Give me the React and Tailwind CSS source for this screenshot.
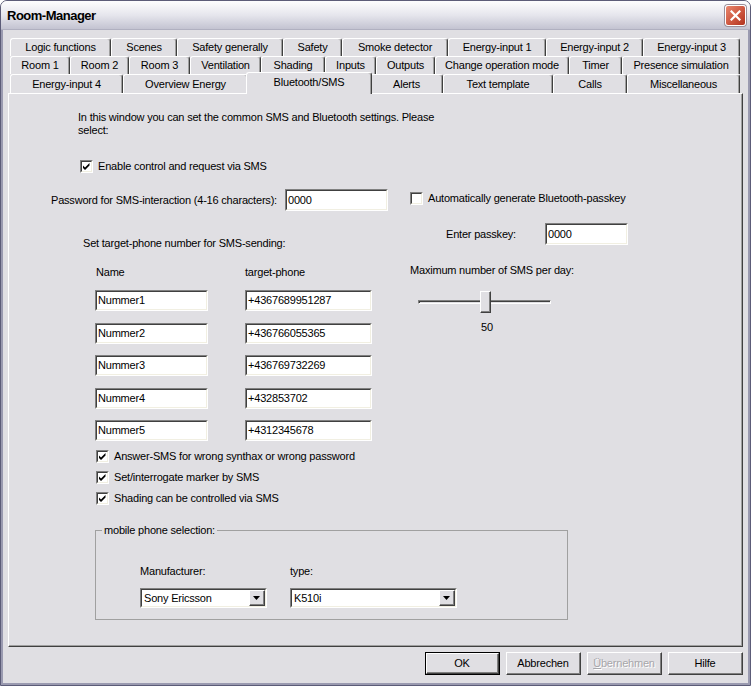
import React from 'react';

const ROW1 = [
  ['Logic functions', 'w-[101px]'],
  ['Scenes', 'w-[66px]'],
  ['Safety generally', 'w-[106px]'],
  ['Safety', 'w-[59px]'],
  ['Smoke detector', 'w-[106px]'],
  ['Energy-input 1', 'w-[98px]'],
  ['Energy-input 2', 'w-[97px]'],
  ['Energy-input 3', 'w-[97px]'],
];
const ROW2 = [
  ['Room 1', 'w-[60px]'],
  ['Room 2', 'w-[59px]'],
  ['Room 3', 'w-[61px]'],
  ['Ventilation', 'w-[71px]'],
  ['Shading', 'w-[64px]'],
  ['Inputs', 'w-[51px]'],
  ['Outputs', 'w-[59px]'],
  ['Change operation mode', 'w-[134px]'],
  ['Timer', 'w-[53px]'],
  ['Presence simulation', 'w-[118px]'],
];
const ROW3 = [
  ['Energy-input 4', 'w-[113px]'],
  ['Overview Energy', 'w-[125px]'],
  ['Bluetooth/SMS', 'w-[122px]', true],
  ['Alerts', 'w-[73px]'],
  ['Text template', 'w-[110px]'],
  ['Calls', 'w-[74px]'],
  ['Miscellaneous', 'w-[113px]'],
];

const PHONES = [
  ['Nummer1', '+4367689951287'],
  ['Nummer2', '+436766055365'],
  ['Nummer3', '+436769732269'],
  ['Nummer4', '+432853702'],
  ['Nummer5', '+4312345678'],
];

const Tab = ({ label, w, h = 'h-[18px]' }) => (
  <div className={`${w} ${h} shrink-0 flex items-center justify-center whitespace-nowrap border-t border-l border-white border-r border-r-[#404040] shadow-[inset_-1px_0_0_#a0a0a0] rounded-t-[3px]`}>
    {label}
  </div>
);

const ActiveTab = ({ label }) => (
  <div className="relative z-10 -mx-[2px] -mt-[2px] w-[126px] h-[22px] shrink-0 flex items-center justify-center pb-[2px] bg-[#e0dfe3] whitespace-nowrap border-t border-l border-white border-r border-r-[#404040] shadow-[inset_-1px_0_0_#a0a0a0] rounded-t-[3px]">
    {label}
  </div>
);

const Edit = ({ value, className }) => (
  <div className={`shrink-0 border-t border-l border-t-[#808080] border-l-[#808080] border-b border-r border-b-white border-r-white ${className}`}>
    <div className="h-full flex items-center pl-[1px] bg-white border-t border-l border-t-[#404040] border-l-[#404040] border-b border-r border-b-[#f1efe2] border-r-[#f1efe2]">
      {value}
    </div>
  </div>
);

const Check = ({ checked, label, className = '' }) => (
  <div className={`flex items-center h-[13px] ${className}`}>
    <span className="w-[13px] h-[13px] shrink-0 border-t border-l border-t-[#808080] border-l-[#808080] border-b border-r border-b-white border-r-white">
      <span className="block w-[11px] h-[11px] bg-white border-t border-l border-t-[#404040] border-l-[#404040] border-b border-r border-b-[#f1efe2] border-r-[#f1efe2]">
        {checked && (
          <svg width="9" height="9" viewBox="0 0 9 9" className="block">
            <path d="M1 3.5 L3 5.5 L7.5 1 L7.5 3.5 L3 8 L1 6 Z" fill="#000" />
          </svg>
        )}
      </span>
    </span>
    <span className="ml-[5px] whitespace-nowrap">{label}</span>
  </div>
);

const Raised = ({ className = '', children }) => (
  <div className={`border-t border-l border-white border-b border-r border-b-[#404040] border-r-[#404040] ${className}`}>
    <div className="w-full h-full flex items-center justify-center border-b border-r border-b-[#808080] border-r-[#808080]">
      {children}
    </div>
  </div>
);

const Combo = ({ value, className }) => (
  <Edit
    className={className}
    value={
      <div className="flex w-full items-center justify-between pl-[1px]">
        <span>{value}</span>
        <Raised className="w-[16px] h-[16px] bg-[#e0dfe3]">
          <svg width="7" height="4" viewBox="0 0 7 4">
            <path d="M0 0 H7 L3.5 4 Z" fill="#000" />
          </svg>
        </Raised>
      </div>
    }
  />
);

const Button = ({ children, def, disabled }) => (
  <div className={`w-[75px] h-[23px] ${def ? 'border border-black' : ''}`}>
    <Raised className="w-full h-full bg-[#e0dfe3]">
      <span className={disabled ? 'text-[#a7a6aa] [text-shadow:1px_1px_0_#fff]' : ''}>{children}</span>
    </Raised>
  </div>
);

export default function App() {
  return (
    <div className="w-[751px] h-[686px] flex flex-col overflow-hidden bg-[#e0dfe3] border border-[#5c5c78] rounded-t-[7px] font-['Liberation_Sans',Arial,sans-serif] text-[11px] leading-[13px] tracking-[-0.2px] text-black">
      {/* title bar */}
      <div className="h-[29px] shrink-0 flex items-center justify-between pl-[6px] pr-[4px] bg-linear-to-b from-[#fdfdfe] via-[#e6e6ed] to-[#c3c3d1] border-b border-[#b0b0c0]">
        <span className="text-[13px] font-bold tracking-[-0.5px]">Room-Manager</span>
        <div className="w-[21px] h-[21px] rounded-[3px] border border-white flex items-center justify-center bg-linear-to-br from-[#e8876e] via-[#d05a43] to-[#b2321e] shadow-[0_0_0_1px_#9a8f9a]">
          <svg width="11" height="11" viewBox="0 0 11 11">
            <path d="M1.5 1.5 L9.5 9.5 M9.5 1.5 L1.5 9.5" stroke="#fff" strokeWidth="2.2" strokeLinecap="square" />
          </svg>
        </div>
      </div>

      <div className="flex-1 flex flex-col border-x-2 border-b-2 border-x-[#9a9ab0] border-b-[#9a9ab0]">
        {/* tabs */}
        <div className="mt-[8px] ml-[7px] flex flex-col">
          <div className="flex h-[18px]">
            {ROW1.map(([l, w]) => <Tab key={l} label={l} w={w} />)}
          </div>
          <div className="flex h-[18px]">
            {ROW2.map(([l, w]) => <Tab key={l} label={l} w={w} />)}
          </div>
          <div className="flex h-[19px] items-start">
            {ROW3.map(([l, w, active]) =>
              active ? <ActiveTab key={l} label={l} /> : <Tab key={l} label={l} w={w} h="h-[19px]" />
            )}
          </div>
        </div>

        {/* page */}
        <div className="ml-[5px] w-[735px] h-[554px] shrink-0 flex flex-col border-t border-l border-white border-b border-r border-b-[#404040] border-r-[#404040] shadow-[inset_-1px_-1px_0_#a0a0a0]">
          <div className="mt-[17px] ml-[69px]">
            In this window you can set the common SMS and Bluetooth settings. Please
            <br />
            select:
          </div>

          <Check checked label="Enable control and request via SMS" className="mt-[23px] ml-[71px]" />

          <div className="mt-[16px] flex">
            {/* left column */}
            <div className="ml-[42px] w-[359px] flex flex-col">
              <div className="flex items-center h-[22px]">
                <span className="w-[234px] whitespace-nowrap">Password for SMS-interaction (4-16 characters):</span>
                <Edit value="0000" className="w-[103px] h-[22px]" />
              </div>
              <div className="mt-[26px] ml-[32px]">Set target-phone number for SMS-sending:</div>
              <div className="mt-[16px] ml-[45px] flex">
                <span className="w-[149px]">Name</span>
                <span>target-phone</span>
              </div>
              <div className="mt-[11px] flex flex-col gap-[11.5px]">
                {PHONES.map(([n, p]) => (
                  <div key={n} className="flex">
                    <Edit value={n} className="ml-[44px] w-[113px] h-[21px]" />
                    <Edit value={p} className="ml-[37px] w-[127px] h-[21px]" />
                  </div>
                ))}
              </div>
            </div>

            {/* right column */}
            <div className="flex flex-col">
              <Check label="Automatically generate Bluetooth-passkey" className="mt-[3px]" />
              <div className="mt-[18px] ml-[36px] flex items-center h-[22px]">
                <span className="w-[99px]">Enter passkey:</span>
                <Edit value="0000" className="w-[83px] h-[22px]" />
              </div>
              <div className="mt-[19px]">Maximum number of SMS per day:</div>
              <div className="mt-[14px] ml-[8px] relative w-[133px] h-[22px] flex items-center">
                <div className="w-full h-[4px] border-t border-l border-[#808080] border-b border-r border-b-white border-r-white shadow-[inset_1px_1px_0_#404040]" />
                <Raised className="absolute left-[62px] top-0 w-[11px] h-[22px] bg-[#e0dfe3]" />
              </div>
              <div className="mt-[8px] ml-[71px]">50</div>
            </div>
          </div>

          <div className="mt-[9px] ml-[87px] flex flex-col gap-[8px]">
            <Check checked label="Answer-SMS for wrong synthax or wrong password" />
            <Check checked label="Set/interrogate marker by SMS" />
            <Check checked label="Shading can be controlled via SMS" />
          </div>

          <div className="relative mt-[25px] ml-[86px] w-[473px] h-[90px] border border-[#a0a0a0] flex">
            <span className="absolute left-[6px] -top-[7px] px-[2px] bg-[#e0dfe3]">mobile phone selection:</span>
            <div className="ml-[44px] w-[150px] flex flex-col">
              <div className="mt-[34px]">Manufacturer:</div>
              <Combo value="Sony Ericsson" className="mt-[10px] w-[127px] h-[20px]" />
            </div>
            <div className="flex flex-col">
              <div className="mt-[34px]">type:</div>
              <Combo value="K510i" className="mt-[10px] w-[167px] h-[20px]" />
            </div>
          </div>
        </div>

        {/* buttons */}
        <div className="mt-[5px] mr-[5px] flex justify-end gap-[6px]">
          <Button def>OK</Button>
          <Button>Abbrechen</Button>
          <Button disabled>
            <span className="underline">Ü</span>bernehmen
          </Button>
          <Button>Hilfe</Button>
        </div>
      </div>
    </div>
  );
}
